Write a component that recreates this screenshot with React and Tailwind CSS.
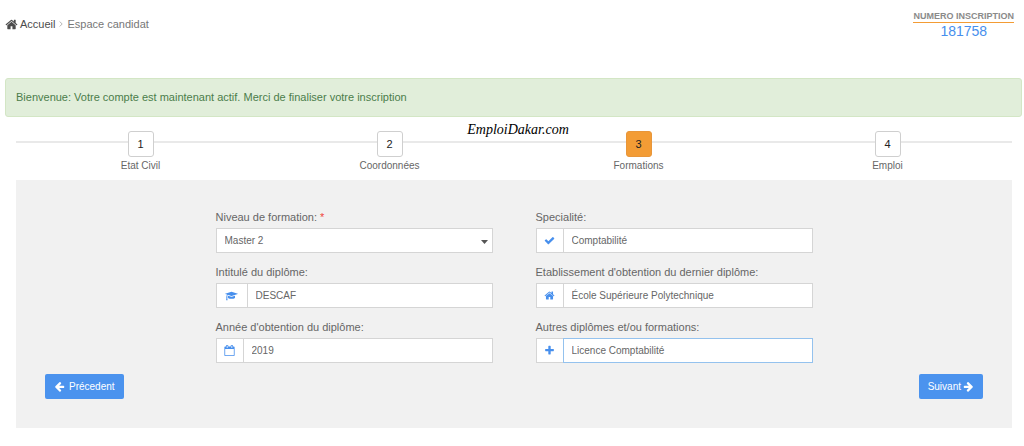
import React from "react";

const ICONS = {
  home: {
    box: "0 0 1792 1792",
    d: "M1472 992v480q0 26-19 45t-45 19h-384v-384h-256v384h-384q-26 0-45-19t-19-45v-480q0-1 .5-3t.5-3l575-474 575 474q1 2 1 6zm223-69l-62 74q-8 9-21 11h-3q-13 0-21-7l-692-577-692 577q-12 8-24 7-13-2-21-11l-62-74q-8-10-7-23.5t11-21.5l719-599q32-26 76-26t76 26l244 204v-195q0-14 9-23t23-9h192q14 0 23 9t9 23v408l219 182q10 8 11 21.5t-7 23.5z",
  },
  check: {
    box: "0 0 1792 1792",
    d: "M1671 566q0 40-28 68l-724 724-136 136q-28 28-68 28t-68-28l-136-136-362-362q-28-28-28-68t28-68l136-136q28-28 68-28t68 28l294 295 656-657q28-28 68-28t68 28l136 136q28 28 28 68z",
  },
  plus: {
    box: "0 0 1792 1792",
    d: "M1600 736v192q0 40-28 68t-68 28h-416v416q0 40-28 68t-68 28h-192q-40 0-68-28t-28-68v-416h-416q-40 0-68-28t-28-68v-192q0-40 28-68t68-28h416v-416q0-40 28-68t68-28h192q40 0 68 28t28 68v416h416q40 0 68 28t28 68z",
  },
  arrowLeft: {
    box: "0 0 1792 1792",
    d: "M1664 896v128q0 53-32.5 90.5t-84.5 37.5h-704l293 294q38 36 38 90t-38 90l-75 76q-37 37-90 37-52 0-91-37l-651-652q-37-37-37-90 0-52 37-91l651-650q38-38 91-38 52 0 90 38l75 74q38 38 38 91t-38 91l-293 293h704q52 0 84.5 37.5t32.5 90.5z",
  },
  arrowRight: {
    box: "0 0 1792 1792",
    d: "M1600 960q0 54-37 91l-651 651q-39 37-91 37-51 0-90-37l-75-75q-38-38-38-91t38-91l293-293h-704q-52 0-84.5-37.5t-32.5-90.5v-128q0-53 32.5-90.5t84.5-37.5h704l-293-294q-38-36-38-90t38-90l75-75q38-38 90-38 53 0 91 38l651 651q37 35 37 90z",
  },
  calendar: {
    box: "0 0 1792 1792",
    d: "M192 1664h1408v-1024h-1408v1024zm384-1216v-288q0-14-9-23t-23-9h-64q-14 0-23 9t-9 23v288q0 14 9 23t23 9h64q14 0 23-9t9-23zm768 0v-288q0-14-9-23t-23-9h-64q-14 0-23 9t-9 23v288q0 14 9 23t23 9h64q14 0 23-9t9-23zm384-64v1280q0 52-38 90t-90 38h-1408q-52 0-90-38t-38-90v-1280q0-52 38-90t90-38h128v-96q0-66 47-113t113-47h64q66 0 113 47t47 113v96h384v-96q0-66 47-113t113-47h64q66 0 113 47t47 113v96h128q52 0 90 38t38 90z",
  },
  graduation: {
    box: "0 0 2304 1792",
    d: "M1774 836l18 316q4 69-82 128t-235 93.5-323 34.5-323-34.5-235-93.5-82-128l18-316 574 181q22 7 48 7t48-7zM2304 512q0 23-22 31l-1120 352q-4 1-10 1t-10-1l-652-206q-43 34-71 111.5t-34 178.5q63 36 63 109 0 69-58 107l58 433q2 14-8 25-9 11-24 11h-192q-15 0-24-11-10-11-8-25l58-433q-58-38-58-107 0-73 65-111 11-207 98-330l-333-104q-22-8-22-31t22-31l1120-352q4-1 10-1t10 1l1120 352q22 8 22 31z",
  },
};

function Icon({ name, className }) {
  const icon = ICONS[name];
  return (
    <svg viewBox={icon.box} className={className} fill="currentColor" aria-hidden="true">
      <path d={icon.d} />
    </svg>
  );
}

const STEPS = ["Etat Civil", "Coordonnées", "Formations", "Emploi"];

function Steps({ current }) {
  return (
    <ol className="grid grid-cols-4 pt-[14px] pb-[6px]">
      {STEPS.map((title, i) => (
        <li
          key={title}
          aria-current={i + 1 === current ? "step" : undefined}
          className="relative flex flex-col items-center before:absolute before:inset-x-0 before:top-[10px] before:h-[2px] before:bg-[#e9e9e9]"
        >
          <span
            className={
              i + 1 === current
                ? "relative flex h-[26px] w-[26px] items-center justify-center rounded-[3px] border border-[#e8963a] bg-[#f39c35] text-[11px] text-[#222]"
                : "relative flex h-[26px] w-[26px] items-center justify-center rounded-[3px] border border-[#cfcfcf] bg-white text-[11px] text-[#222]"
            }
          >
            {i + 1}
          </span>
          <span className="text-[10px] leading-[17px] text-[#666]">{title}</span>
        </li>
      ))}
    </ol>
  );
}

function Field({ id, label, icon, iconClass = "h-[11px] w-[11px]", wide, active, value }) {
  return (
    <div className="flex flex-col gap-[3px]">
      <label htmlFor={id} className="text-[11px] leading-4">
        {label}
      </label>
      <div className="flex h-[25px]">
        <span
          className={
            wide
              ? "flex w-[31px] shrink-0 items-center justify-center border border-r-0 border-[#d5d5d5] bg-white text-[#478fed]"
              : "flex w-[27px] shrink-0 items-center justify-center border border-r-0 border-[#d5d5d5] bg-white text-[#478fed]"
          }
        >
          <Icon name={icon} className={iconClass} />
        </span>
        <input
          id={id}
          type="text"
          defaultValue={value}
          className={
            active
              ? "w-full min-w-0 border border-[#94c2ee] bg-white px-2 text-[10px] outline-none"
              : "w-full min-w-0 border border-[#d5d5d5] bg-white px-2 text-[10px] outline-none focus:border-[#94c2ee]"
          }
        />
      </div>
    </div>
  );
}

export default function App() {
  return (
    <div className="bg-white font-['Liberation_Sans',Arial,sans-serif] text-[#666]">
      <header className="flex h-[78px] items-start justify-between pr-[10px] pl-[5px]">
        <nav aria-label="Fil d'Ariane" className="flex items-center pt-4 text-[11px] leading-4">
          <a href="#accueil" className="flex items-center gap-[2px] text-[#4c4c4c]">
            <Icon name="home" className="h-[13px] w-[13px]" />
            Accueil
          </a>
          <svg viewBox="0 0 4 6" className="mx-1 h-[6px] w-1" fill="none" stroke="#b5b5b5" aria-hidden="true">
            <path d="M.7.5 3.2 3 .7 5.500" />
          </svg>
          <span className="text-[#777]">Espace candidat</span>
        </nav>
        <div className="flex flex-col items-center pt-[11px]">
          <span className="border-b border-[#f39c35] text-[9px] leading-[11px] font-bold text-[#8a8a8a]">
            NUMERO INSCRIPTION
          </span>
          <span className="text-[14px] leading-4 text-[#478fed]">181758</span>
        </div>
      </header>

      <div
        role="status"
        className="mr-[2px] ml-[5px] rounded-[3px] border border-[#d3e6c5] bg-[#e1eeda] px-[10px] py-[10px] text-[11px] leading-[17px] text-[#4b7d4a]"
      >
        Bienvenue: Votre compte est maintenant actif. Merci de finaliser votre inscription
      </div>

      <main className="relative mr-3 ml-4">
        <div className="absolute inset-x-0 top-[5px] z-10 pl-2 text-center font-['Snell_Roundhand','Liberation_Serif',serif] text-[14px] leading-4 text-black italic">
          EmploiDakar.com
        </div>
        <Steps current={3} />

        <form className="bg-[#f1f1f1] px-[29px] py-[29px]" onSubmit={(e) => e.preventDefault()}>
          <div className="mx-auto grid max-w-[597px] grid-cols-2 gap-x-[43px] gap-y-[11px]">
            <div className="flex flex-col gap-[3px]">
              <label htmlFor="niveau" className="text-[11px] leading-4">
                Niveau de formation: <span className="text-[#f0443c]">*</span>
              </label>
              <div className="relative flex h-[25px]">
                <select
                  id="niveau"
                  defaultValue="Master 2"
                  className="w-full appearance-none border border-[#d5d5d5] bg-white px-2 text-[10px] outline-none"
                >
                  <option>Master 2</option>
                </select>
                <svg
                  viewBox="0 0 7 4"
                  className="pointer-events-none absolute top-3 right-[5px] h-1 w-[7px]"
                  fill="#555"
                  aria-hidden="true"
                >
                  <path d="M0 0h7L3.5 4z" />
                </svg>
              </div>
            </div>
            <Field id="specialite" label="Specialité:" icon="check" value="Comptabilité" />
            <Field
              id="intitule"
              label="Intitulé du diplôme:"
              icon="graduation"
              iconClass="h-[10px] w-[13px]"
              wide
              value="DESCAF"
            />
            <Field
              id="etablissement"
              label="Etablissement d'obtention du dernier diplôme:"
              icon="home"
              value="École Supérieure Polytechnique"
            />
            <Field id="annee" label="Année d'obtention du diplôme:" icon="calendar" value="2019" />
            <Field
              id="autres"
              label="Autres diplômes et/ou formations:"
              icon="plus"
              active
              value="Licence Comptabilité"
            />
          </div>

          <div className="mt-[11px] flex justify-between">
            <button
              type="button"
              className="flex h-[25px] items-center gap-1 rounded-[2px] bg-[#4b93ee] px-[9px] text-[10px] text-white"
            >
              <Icon name="arrowLeft" className="h-[11px] w-[11px]" />
              Précedent
            </button>
            <button
              type="submit"
              className="flex h-[25px] items-center gap-[2px] rounded-[2px] bg-[#4b93ee] px-[9px] text-[10px] text-white"
            >
              Suivant
              <Icon name="arrowRight" className="h-[11px] w-[11px]" />
            </button>
          </div>
        </form>
      </main>
    </div>
  );
}
